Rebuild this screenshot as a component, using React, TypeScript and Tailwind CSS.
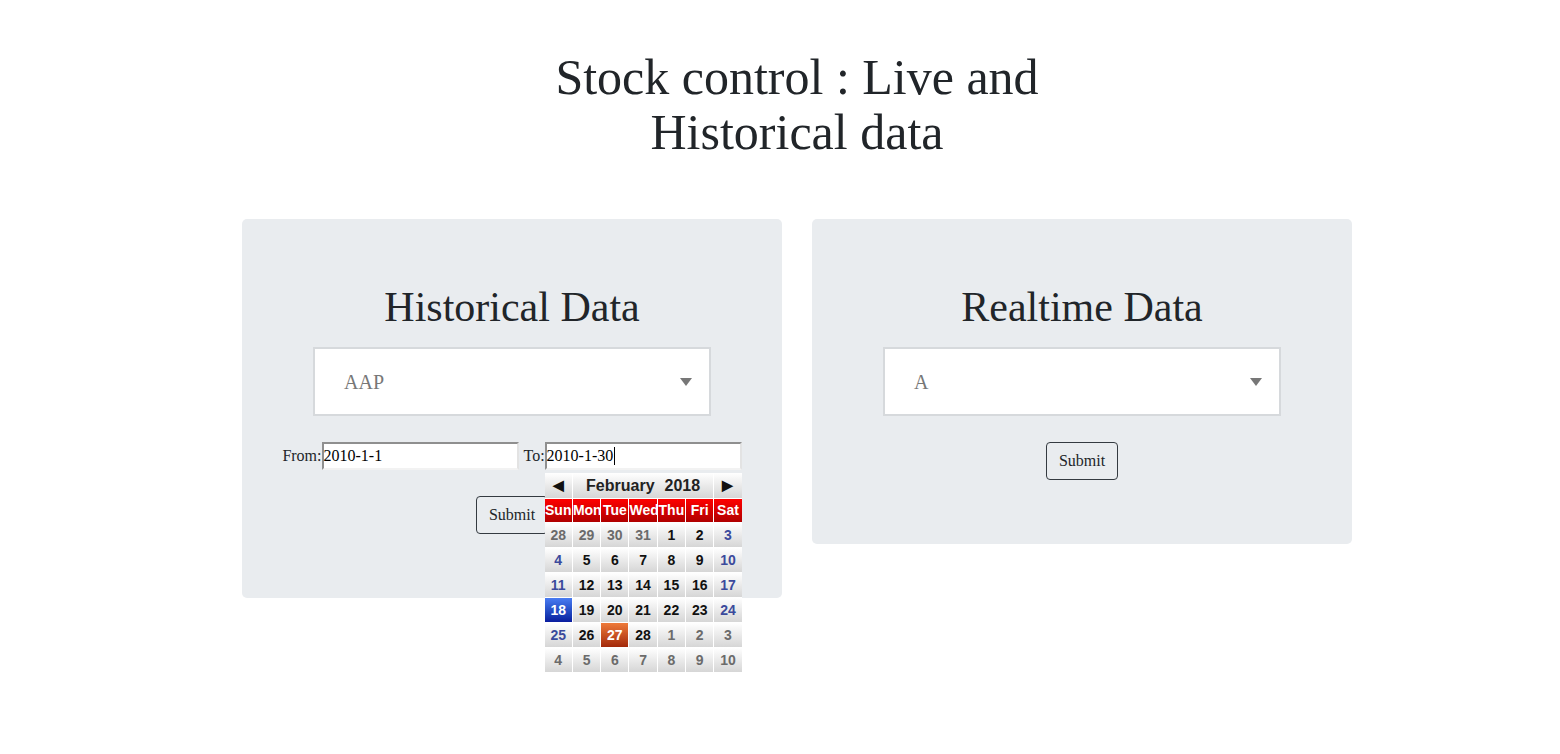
import React from 'react';

type Day = { n: number; kind: 'other' | 'week' | 'end' | 'today' | 'sel' };

const weeks: Day[][] = [
  [
    { n: 28, kind: 'other' },
    { n: 29, kind: 'other' },
    { n: 30, kind: 'other' },
    { n: 31, kind: 'other' },
    { n: 1, kind: 'week' },
    { n: 2, kind: 'week' },
    { n: 3, kind: 'end' },
  ],
  [
    { n: 4, kind: 'end' },
    { n: 5, kind: 'week' },
    { n: 6, kind: 'week' },
    { n: 7, kind: 'week' },
    { n: 8, kind: 'week' },
    { n: 9, kind: 'week' },
    { n: 10, kind: 'end' },
  ],
  [
    { n: 11, kind: 'end' },
    { n: 12, kind: 'week' },
    { n: 13, kind: 'week' },
    { n: 14, kind: 'week' },
    { n: 15, kind: 'week' },
    { n: 16, kind: 'week' },
    { n: 17, kind: 'end' },
  ],
  [
    { n: 18, kind: 'today' },
    { n: 19, kind: 'week' },
    { n: 20, kind: 'week' },
    { n: 21, kind: 'week' },
    { n: 22, kind: 'week' },
    { n: 23, kind: 'week' },
    { n: 24, kind: 'end' },
  ],
  [
    { n: 25, kind: 'end' },
    { n: 26, kind: 'week' },
    { n: 27, kind: 'sel' },
    { n: 28, kind: 'week' },
    { n: 1, kind: 'other' },
    { n: 2, kind: 'other' },
    { n: 3, kind: 'other' },
  ],
  [
    { n: 4, kind: 'other' },
    { n: 5, kind: 'other' },
    { n: 6, kind: 'other' },
    { n: 7, kind: 'other' },
    { n: 8, kind: 'other' },
    { n: 9, kind: 'other' },
    { n: 10, kind: 'other' },
  ],
];

const dayNames = ['Sun', 'Mon', 'Tue', 'Wed', 'Thu', 'Fri', 'Sat'];

const cellStyle: Record<Day['kind'], string> = {
  other: 'bg-linear-to-b from-white to-[#d6d6d6] text-[#6b6b6b]',
  week: 'bg-linear-to-b from-white to-[#d6d6d6] text-[#111111]',
  end: 'bg-linear-to-b from-white to-[#d6d6d6] text-[#3b4a9c]',
  today: 'bg-linear-to-b from-[#4a7cf2] to-[#0b1c9e] text-white',
  sel: 'bg-linear-to-b from-[#ee7a3a] to-[#a3280a] text-white',
};

const Calendar: React.FC = () => (
  <div className="absolute left-0 top-[31px] z-10 w-[197px] bg-white font-['Liberation_Sans',Arial,sans-serif] text-[14px] font-bold">
    <div className="grid grid-cols-7 gap-px">
      <div className="flex h-[25px] items-center justify-center bg-linear-to-b from-white to-[#d6d6d6] text-[14px] text-[#111]">
        ◀
      </div>
      <div className="col-span-5 flex h-[25px] items-center justify-center gap-[10px] bg-linear-to-b from-white to-[#d6d6d6] text-[16px] text-[#222]">
        <span>February</span>
        <span>2018</span>
      </div>
      <div className="flex h-[25px] items-center justify-center bg-linear-to-b from-white to-[#d6d6d6] text-[14px] text-[#111]">
        ▶
      </div>
      {dayNames.map((d) => (
        <div
          key={d}
          className="h-[23px] overflow-hidden whitespace-nowrap bg-linear-to-b from-[#ff0000] to-[#b00000] text-center leading-[23px] text-white"
        >
          {d}
        </div>
      ))}
      {weeks.flat().map((d, i) => (
        <div
          key={i}
          className={`flex h-[24px] items-center justify-center ${cellStyle[d.kind]}`}
        >
          {d.n}
        </div>
      ))}
    </div>
  </div>
);

const SelectBox: React.FC<{ value: string }> = ({ value }) => (
  <div className="flex h-[69px] w-[398px] items-center justify-between border-2 border-[#d6d9dc] bg-white pl-[29px] pr-[17px] text-[20px] text-[#777]">
    <span>{value}</span>
    <svg width="12" height="8" viewBox="0 0 12 8">
      <path d="M0 0 L12 0 L6 8 Z" fill="#777" />
    </svg>
  </div>
);

const SubmitButton: React.FC = () => (
  <button className="mt-[26px] h-[38px] rounded-[4px] border border-[#343a40] bg-transparent px-[12px] text-[16px] text-[#212529]">
    Submit
  </button>
);

const DateInput: React.FC<{ value: string; caret?: boolean }> = ({ value, caret }) => (
  <div className="flex h-[28px] w-[197px] items-center border-2 border-t-[#8f8f8f] border-l-[#8f8f8f] border-r-[#e3e3e3] border-b-[#f2f2f2] bg-white text-[16px] text-black">
    <span>{value}</span>
    {caret && <span className="ml-px inline-block h-[18px] w-px bg-black" />}
  </div>
);

export default function App() {
  return (
    <div className="min-h-screen bg-white font-['Liberation_Serif','Times_New_Roman',serif] text-[#212529]">
      <div className="pl-[34px]">
        <div className="mx-auto w-[1110px]">
          <h1 className="mx-auto w-[540px] pt-[50px] text-center text-[50px] font-normal leading-[55px]">
            Stock control : Live and Historical data
          </h1>

          <div className="mt-[59px] flex items-start gap-[30px]">
            {/* Historical */}
            <div className="flex w-[540px] flex-col items-center rounded-[5px] bg-[#e9ecef] pb-[64px] pt-[64px]">
              <h2 className="mb-[16px] text-[42px] font-normal leading-[48px]">Historical Data</h2>
              <SelectBox value="AAP" />
              <div className="mt-[26px] flex h-[28px] items-center whitespace-nowrap text-[16px]">
                <span>From:</span>
                <DateInput value="2010-1-1" />
                <span className="ml-[5px]">To:</span>
                <div className="relative">
                  <DateInput value="2010-1-30" caret />
                  <Calendar />
                </div>
              </div>
              <SubmitButton />
            </div>

            {/* Realtime */}
            <div className="flex w-[540px] flex-col items-center rounded-[5px] bg-[#e9ecef] pb-[64px] pt-[64px]">
              <h2 className="mb-[16px] text-[42px] font-normal leading-[48px]">Realtime Data</h2>
              <SelectBox value="A" />
              <SubmitButton />
            </div>
          </div>
        </div>
      </div>
    </div>
  );
}
